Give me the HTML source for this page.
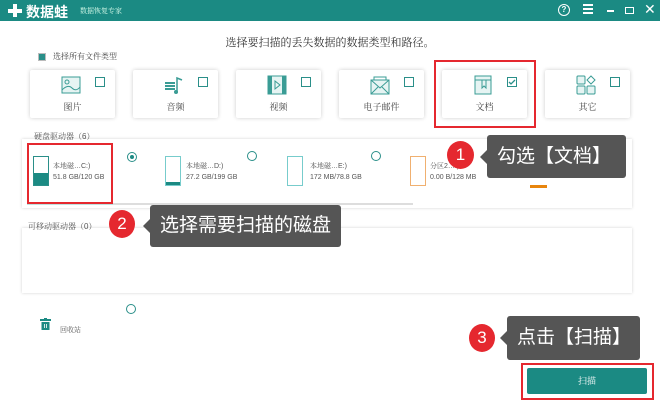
<!DOCTYPE html>
<html><head><meta charset="utf-8"><style>
body{margin:0;width:660px;height:403px;background:#fff;position:relative;overflow:hidden;font-family:"Liberation Sans","Noto Serif CJK SC","Noto Sans CJK SC",serif;color:#333}
.a{position:absolute}
.hdr{left:0;top:0;width:660px;height:21px;background:#1b8a83}
.card{background:#fff;box-shadow:0 0 4px rgba(0,0,0,.2);border-radius:2px;width:85px;height:48px;top:70px}
.card .lbl{position:absolute;top:30px;width:100%;text-align:center;font-size:9px;color:#444}
.cb{position:absolute;right:10px;top:7px;width:8px;height:8px;border:1px solid #2a8f89;background:#fff}
.ic{position:absolute;left:31px;top:5px;width:20px;height:20px}
.red{border:2px solid #e5282f;box-sizing:border-box}
.cir{border-radius:50%;background:#e5282f;color:#fff;text-align:center;font-family:"Liberation Sans","Noto Sans CJK SC",sans-serif}
.tip{background:#555;border-radius:3px;color:#fff;font-family:"Liberation Sans","Noto Sans CJK SC",sans-serif;font-size:19px;box-sizing:border-box;padding-left:10px}
.tip:before{content:"";position:absolute;left:-7px;top:50%;margin-top:-7px;border:7px solid transparent;border-left:0;border-right-color:#555}
.drv{width:16px;height:30px;border:1px solid #7cc;box-sizing:border-box}
.dt{font-size:7px;color:#555;line-height:11px}
.rad{width:8px;height:8px;border:1px solid #2a8f89;border-radius:50%}
</style></head><body>
<div class="a hdr"></div>
<div class="a" style="left:8px;top:4px;width:14px;height:13px"><div class="a" style="left:5px;top:0;width:4px;height:13px;background:#fff"></div><div class="a" style="left:0;top:5px;width:14px;height:4px;background:#fff"></div></div>
<div class="a" style="left:26px;top:2px;color:#fff;font-size:14px;font-weight:bold;font-family:'Liberation Sans','Noto Sans CJK SC',sans-serif">数据蛙</div>
<div class="a" style="left:80px;top:6px;color:#dfe;font-size:7px">数据恢复专家</div>
<div class="a" style="left:558px;top:4px;width:10px;height:10px;border:1.5px solid #fff;border-radius:50%;color:#fff;font-size:8px;text-align:center;line-height:10px;font-weight:bold">?</div>
<div class="a" style="left:583px;top:4px;width:10px;height:2px;background:#fff;box-shadow:0 4px 0 #fff,0 8px 0 #fff"></div>
<div class="a" style="left:607px;top:10px;width:7px;height:1.5px;background:#fff"></div>
<div class="a" style="left:625px;top:7px;width:7px;height:5px;border:1.5px solid #fff"></div>
<div class="a" style="left:644px;top:1px;color:#fff;font-size:14px;font-family:'Liberation Sans',sans-serif">✕</div>

<div class="a" style="left:0;width:660px;top:34px;text-align:center;font-size:11px;color:#333">选择要扫描的丢失数据的数据类型和路径。</div>
<div class="a" style="left:39px;top:54px;width:6px;height:6px;background:#2a8f89;outline:1px solid #bbb"></div>
<div class="a" style="left:53px;top:51px;font-size:8px;color:#444">选择所有文件类型</div>

<div class="a card" style="left:30px"><svg class="ic" viewBox="0 0 20 20"><rect x="1" y="2" width="18" height="16" fill="#e6f4f3" stroke="#3a9c95"/><circle cx="6" cy="7" r="2" fill="none" stroke="#3a9c95"/><path d="M1 15 Q7 9 11 13 T19 12" fill="none" stroke="#3a9c95"/></svg><div class="cb"></div><div class="lbl">图片</div></div>
<div class="a card" style="left:133px"><svg class="ic" viewBox="0 0 20 20"><path d="M1 8h10M1 11h10M1 14h10" stroke="#3a9c95" stroke-width="2"/><path d="M13 18V3l5 2" fill="none" stroke="#3a9c95" stroke-width="1.5"/><circle cx="12" cy="17" r="2" fill="#3a9c95"/></svg><div class="cb"></div><div class="lbl">音频</div></div>
<div class="a card" style="left:236px"><svg class="ic" viewBox="0 0 20 20"><rect x="1" y="1" width="18" height="18" fill="#e6f4f3" stroke="#3a9c95"/><rect x="1" y="1" width="4" height="18" fill="#3a9c95"/><rect x="15" y="1" width="4" height="18" fill="#3a9c95"/><path d="M8 6l5 4-5 4z" fill="none" stroke="#3a9c95"/></svg><div class="cb"></div><div class="lbl">视频</div></div>
<div class="a card" style="left:339px"><svg class="ic" viewBox="0 0 20 20"><rect x="1" y="5" width="18" height="14" fill="#e6f4f3" stroke="#3a9c95"/><path d="M1 5l9 8 9-8M1 19l7-7M19 19l-7-7M4 5V2h12v3" fill="none" stroke="#3a9c95"/></svg><div class="cb"></div><div class="lbl">电子邮件</div></div>
<div class="a card" style="left:442px"><svg class="ic" viewBox="0 0 20 20"><rect x="2" y="1" width="16" height="18" fill="#e6f4f3" stroke="#3a9c95"/><path d="M2 5h16M9 5v8l2-2 2 2V5" fill="none" stroke="#3a9c95"/></svg><svg class="a" style="right:10px;top:7px" width="10" height="10" viewBox="0 0 10 10"><rect x=".5" y=".5" width="9" height="9" fill="#fff" stroke="#2a8f89"/><path d="M2 5l2 2 4-4" fill="none" stroke="#2a8f89" stroke-width="1.3"/></svg><div class="lbl">文档</div></div>
<div class="a card" style="left:545px"><svg class="ic" viewBox="0 0 20 20"><rect x="1" y="1" width="8" height="8" rx="1" fill="#e6f4f3" stroke="#3a9c95"/><path d="M15 1l4 4-4 4-4-4z" fill="none" stroke="#3a9c95"/><rect x="1" y="11" width="8" height="8" rx="1" fill="#e6f4f3" stroke="#3a9c95"/><rect x="11" y="11" width="8" height="8" rx="1" fill="#e6f4f3" stroke="#3a9c95"/></svg><div class="cb"></div><div class="lbl">其它</div></div>
<div class="a red" style="left:434px;top:60px;width:102px;height:68px"></div>

<div class="a" style="left:34px;top:131px;font-size:8px;color:#555">硬盘驱动器（6）</div>
<div class="a" style="left:22px;top:139px;width:610px;height:69px;box-shadow:0 0 3px rgba(0,0,0,.18)"></div>
<div class="a" style="left:27px;top:203px;width:386px;height:2px;background:#ddd"></div>
<div class="a" style="left:27px;top:203px;width:86px;height:2px;background:#bfe2df"></div>

<div class="a drv" style="left:33px;top:156px;border-color:#2a8f89"><div class="a" style="left:0;bottom:0;width:14px;height:12px;background:#1b8a83"></div></div>
<div class="a dt" style="left:53px;top:161px">本地磁…C:)<br>51.8 GB/120 GB</div>
<div class="a rad" style="left:127px;top:152px"><div class="a" style="left:2px;top:2px;width:4px;height:4px;border-radius:50%;background:#1b8a83"></div></div>
<div class="a drv" style="left:165px;top:156px"><div class="a" style="left:0;bottom:0;width:14px;height:3px;background:#1b8a83"></div></div>
<div class="a dt" style="left:186px;top:161px">本地磁…D:)<br>27.2 GB/199 GB</div>
<div class="a rad" style="left:247px;top:151px"></div>
<div class="a drv" style="left:287px;top:156px"></div>
<div class="a dt" style="left:310px;top:161px">本地磁…E:)<br>172 MB/78.8 GB</div>
<div class="a rad" style="left:371px;top:151px"></div>
<div class="a drv" style="left:410px;top:156px;border-color:#f0b070"></div>
<div class="a dt" style="left:430px;top:161px">分区2…:)<br>0.00 B/128 MB</div>
<div class="a" style="left:530px;top:185px;width:17px;height:3px;background:#e8850d"></div>
<div class="a dt" style="left:545px;top:165px">27.0 MB/299 MB</div>
<div class="a rad" style="left:616px;top:151px"></div>
<div class="a red" style="left:27px;top:143px;width:86px;height:61px"></div>

<div class="a" style="left:28px;top:221px;font-size:8px;color:#555">可移动驱动器（0）</div>
<div class="a" style="left:22px;top:228px;width:610px;height:65px;box-shadow:0 0 3px rgba(0,0,0,.18)"></div>

<div class="a rad" style="left:126px;top:304px"></div>
<svg class="a" style="left:40px;top:318px" width="11" height="12" viewBox="0 0 11 12"><rect x="0" y="1" width="11" height="2" fill="#1b8a83"/><rect x="4" y="0" width="3" height="1" fill="#1b8a83"/><rect x="1.5" y="4" width="8" height="8" fill="#1b8a83"/><path d="M4.5 6v4M6.5 6v4" stroke="#fff" stroke-width=".8"/></svg>
<div class="a" style="left:60px;top:325px;font-size:7px;color:#555">回收站</div>

<div class="a" style="left:527px;top:368px;width:120px;height:26px;background:#1b8a83;border-radius:2px;color:#fff;font-size:9px;text-align:center;line-height:26px">扫描</div>
<div class="a red" style="left:521px;top:363px;width:133px;height:37px"></div>

<div class="a cir" style="left:447px;top:141px;width:27px;height:28px;line-height:28px;font-size:17px">1</div>
<div class="a tip" style="left:487px;top:135px;width:139px;height:43px;line-height:43px">勾选【文档】</div>
<div class="a cir" style="left:109px;top:210px;width:26px;height:28px;line-height:28px;font-size:17px">2</div>
<div class="a tip" style="left:150px;top:205px;width:191px;height:42px;line-height:42px">选择需要扫描的磁盘</div>
<div class="a cir" style="left:469px;top:324px;width:26px;height:28px;line-height:28px;font-size:17px">3</div>
<div class="a tip" style="left:507px;top:316px;width:133px;height:44px;line-height:44px">点击【扫描】</div>
</body></html>
